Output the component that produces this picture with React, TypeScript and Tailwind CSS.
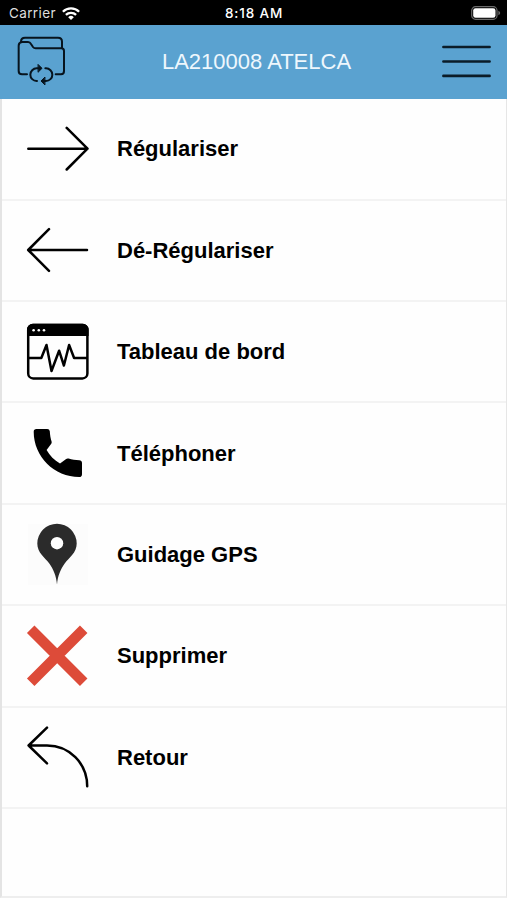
import React from 'react';

interface MenuItem {
  label: string;
  icon: React.ReactNode;
}

interface LineIconProps {
  d: string;
}

function LineIcon({ d }: LineIconProps) {
  return (
    <svg
      viewBox="0 0 64 64"
      className="size-16"
      fill="none"
      stroke="black"
      strokeWidth="2.5"
      strokeLinecap="round"
      strokeLinejoin="round"
    >
      <path d={d} />
    </svg>
  );
}

function DashboardIcon() {
  return (
    <svg viewBox="0 0 64 64" className="size-16" fill="none" stroke="black" strokeWidth="2.5">
      <rect x="3.2" y="5" width="59.2" height="53.4" rx="5" />
      <path d="M2 16V9.3a5.5 5.5 0 0 1 5.5-5.5h50.6a5.5 5.5 0 0 1 5.5 5.5V16z" fill="black" stroke="none" />
      <path d="M4 38h12.3l5.2-13 5 26 7.6-20.3 4.8 14.8 5.2-20.5 5 13H62" strokeLinejoin="round" />
      <g fill="white" stroke="none">
        <circle cx="8.6" cy="10.2" r="1.3" />
        <circle cx="13.8" cy="10.2" r="1.3" />
        <circle cx="19" cy="10.2" r="1.3" />
      </g>
    </svg>
  );
}

function PhoneIcon() {
  return (
    <svg viewBox="0 0 64 64" className="size-16">
      <path d="M11.5 8h10.7q2.3 0 2.6 2.3c.2 3.8.8 7.2 1.8 10.2q.5 1.6-.7 2.8L21.6 29c3.2 5.8 7.7 10.2 13.4 13.4l5.8-4.2q1.3-1 2.8-.6c3.4 1 6.8 1.5 10.6 1.6q2.8.2 2.8 2.8v11.2q0 2.8-2.8 2.8C29.2 56 8.7 35.8 8.7 10.8Q8.7 8 11.5 8z" />
    </svg>
  );
}

function PinIcon() {
  return (
    <svg viewBox="0 0 64 64" className="size-16">
      <rect x="3" y="2" width="60" height="61" fill="#fcfcfc" />
      <path
        d="M32 62.5C31.2 53.5 28.5 47.5 24.3 41.5C20 35.5 12.3 31 12.3 21.5a19.7 19.7 0 0 1 39.4 0C51.7 31 44 35.5 39.7 41.5C35.5 47.5 32.8 53.5 32 62.5z"
        fill="#2b2b2b"
      />
      <circle cx="32" cy="21.2" r="6.2" fill="white" />
    </svg>
  );
}

function CrossIcon() {
  return (
    <svg viewBox="0 0 64 64" className="size-16" stroke="#dd4b39" strokeWidth="10.6">
      <path d="M5.7 5.2l53 53M58.7 5.2l-53 53" />
    </svg>
  );
}

function FolderSyncIcon() {
  return (
    <svg
      viewBox="0 0 156 156"
      className="size-[52px]"
      fill="none"
      stroke="#07141e"
      strokeWidth="6"
      strokeLinecap="round"
      strokeLinejoin="round"
    >
      <path d="M33 121H18q-10 0-10-10V35q0-10 10-11h18q6 0 9 6l6 9q3 4 8 4h77q8 0 8 8v60q0 10-9 10h-16" />
      <path d="M15 23q0-12 12-12h99q12 0 12 12v18" />
      <path d="M63 141h-1a19 19 0 0 1 0-38h11" />
      <path d="M67 92l11 11-11 11z" fill="#07141e" strokeWidth="3" />
      <path d="M88 103h2a19 19 0 0 1 0 38H79" />
      <path d="M86 130l-11 11 11 11z" fill="#07141e" strokeWidth="3" />
    </svg>
  );
}

function WifiIcon() {
  return (
    <svg viewBox="0 0 18 14" className="h-[14px] w-[18px]" fill="none" stroke="white" strokeWidth="2.3">
      <path d="M.9 4.8a11.5 11.5 0 0 1 16.2 0" />
      <path d="M3.9 7.9a7.2 7.2 0 0 1 10.2 0" />
      <path d="M9 12.9L6.2 10.2a4 4 0 0 1 5.6 0z" fill="white" stroke="none" />
    </svg>
  );
}

function BatteryIcon() {
  return (
    <svg viewBox="0 0 30 14" className="h-[14px] w-[30px]">
      <rect x=".7" y=".7" width="25.3" height="12.6" rx="3.8" fill="none" stroke="#6b6b6b" strokeWidth="1.2" />
      <rect x="2.2" y="2.2" width="22.3" height="9.6" rx="2.3" fill="white" />
      <path d="M27.4 4.8q1.8.7 1.8 2.2t-1.8 2.2z" fill="#6b6b6b" />
    </svg>
  );
}

const items: MenuItem[] = [
  { label: 'Régulariser', icon: <LineIcon d="M3.3 31.7h59M41.7 10.9L62.5 31.7 41.7 52.5" /> },
  { label: 'Dé-Régulariser', icon: <LineIcon d="M62 32H3.3M24 11.2L3.2 32 24 52.8" /> },
  { label: 'Tableau de bord', icon: <DashboardIcon /> },
  { label: 'Téléphoner', icon: <PhoneIcon /> },
  { label: 'Guidage GPS', icon: <PinIcon /> },
  { label: 'Supprimer', icon: <CrossIcon /> },
  { label: 'Retour', icon: <LineIcon d="M22 2.7L3.6 20.5 22 38.3M3.6 20.5H22C44 20.5 62.2 38 62.2 61.3" /> },
];

export default function App() {
  return (
    <div className="flex h-[900px] w-full flex-col bg-white font-['Liberation_Sans',Arial,sans-serif]">
      <div className="grid h-[25px] shrink-0 grid-cols-3 items-center bg-black pt-[2px] pr-[6px] pl-[9px] font-[Inter,sans-serif] text-[13.5px] text-white">
        <div className="flex items-center gap-[6px]">
          <span className="tracking-[0.37px] text-[#dedede]">Carrier</span>
          <WifiIcon />
        </div>
        <span className="pr-[2px] text-center font-medium tracking-[0.85px]">8:18 AM</span>
        <div className="flex justify-end pb-px">
          <BatteryIcon />
        </div>
      </div>

      <header className="flex h-[73.6px] shrink-0 items-center justify-between bg-[#5aa2d0] pr-[15px] pl-4">
        <button className="pb-1">
          <FolderSyncIcon />
        </button>
        <h1 className="pl-[5px] text-[22px] text-[#eef7fd]">LA210008 ATELCA</h1>
        <button>
          <svg viewBox="0 0 52 34" className="h-[34px] w-[52px]" stroke="#0b1c28" strokeWidth="2.6" strokeLinecap="round">
            <path d="M3.4 2h46.2M3.4 16.5h46.2M3.4 30.9h46.2" />
          </svg>
        </button>
      </header>

      <main className="flex h-[799.4px] shrink-0 flex-col border-r border-b-2 border-l-2 border-r-[#e6e6e6] border-b-[#eeeeee] border-l-[#e4e4e4] bg-[#fefefe] pt-[0.6px]">
        {items.map((item) => (
          <div
            key={item.label}
            className="flex h-[101.4px] shrink-0 items-center gap-[28px] border-b-2 border-[#f3f3f3] pl-[23px]"
          >
            {item.icon}
            <span className="text-[22px] font-bold text-black">{item.label}</span>
          </div>
        ))}
      </main>
    </div>
  );
}
